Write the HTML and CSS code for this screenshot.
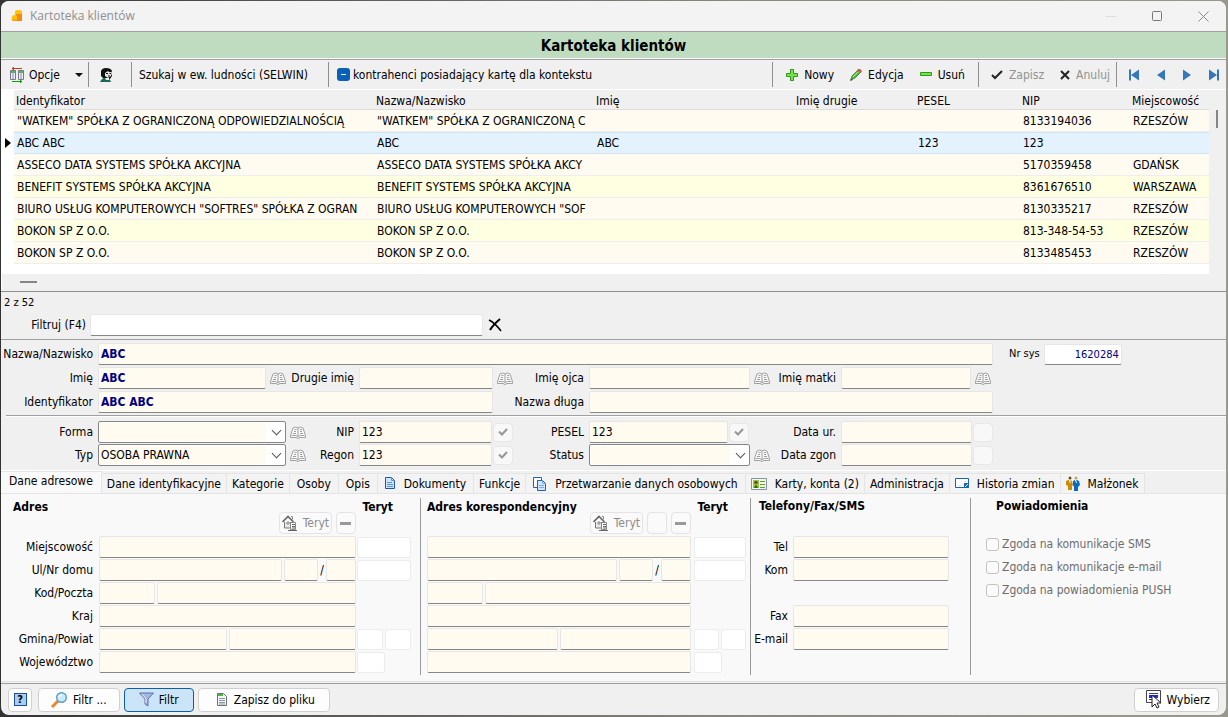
FILE: index.html
```html
<!DOCTYPE html>
<html lang="pl">
<head>
  <meta charset="UTF-8">
  <meta name="viewport" content="width=device-width, initial-scale=1.0">
  <title>Kartoteka klientów</title>
  <link rel="stylesheet" href="styles.css">
</head>
<body>
  <svg class="defs" aria-hidden="true">
    <symbol id="book" viewBox="0 0 16 14">
      <path d="M.5 12.500V10.500L3 3Q5.500 1 8 3Q10.500 1 13 3L15.500 10.500V12.500H10L8 13.500L6 12.500z" fill="#f8f8f8" stroke="#a0a0a0"/>
      <path d="M8 3v8M4.500 4.500h2M4 6.500h2M3 8.500h3M10 4.500h2M10 6.500h2M10 8.500h3M1.500 10.500h4l2.500 1 2.500-1h4" fill="none" stroke="#a0a0a0"/>
    </symbol>
    <symbol id="tick" viewBox="0 0 10 10">
      <path d="M1 4.500L4 7.500L9 2" fill="none" stroke="#969696" stroke-width="2"/>
    </symbol>
    <symbol id="house" viewBox="0 0 16 16">
      <path d="M2.500 7v6h6V7" fill="#e8e8e8" stroke="#777"/>
      <path d="M.5 7L6 1.500L11.500 7" fill="none" stroke="#666" stroke-width="1.600"/>
      <path d="M9 1.500h1.500v3M5 7h2v2H5z" fill="none" stroke="#888"/>
      <path d="M8.500 7.500h5v7h-5z" fill="#fff" stroke="#888"/>
      <path d="M10 9.500h3M10 11.500h3M10 13h3M6 15.500h9" stroke="#666"/>
    </symbol>
  </svg>

  <div class="window">
    <div class="titlebar">
      <svg width="12" height="14" viewBox="0 0 12 14"><path d="M4 3q0-2 3-2t4 1v5H4z" fill="#ffc20a"/><path d="M5 5h6v7H5z" fill="#f58a12"/><path d="M1 7q2-2 5 0v5H2Q0 12 1 7z" fill="#ffc20a"/><path d="M1 10q4 2 10 0v1q-5 2-10 0z" fill="#ef8b12"/></svg>
      <span class="caption">Kartoteka klientów</span>
      <button class="win-btn" aria-label="Minimalizuj"><svg width="11" height="11"><path d="M0 5.500h10" stroke="#ddd"/></svg></button>
      <button class="win-btn" aria-label="Maksymalizuj"><svg width="11" height="11"><rect x=".5" y=".5" width="9" height="9" rx="1" fill="none" stroke="#777"/></svg></button>
      <button class="win-btn" aria-label="Zamknij"><svg width="11" height="11"><path d="M.5 .5l10 10M10.500 .5l-10 10" stroke="#888"/></svg></button>
    </div>

    <h1 class="banner">Kartoteka klientów</h1>

    <div class="toolbar">
      <button class="tool options">
        <svg width="14" height="16" viewBox="0 0 14 16"><path d="M.5 3.500h5v9h-5zM8.500 3.500h5v9h-5z" fill="#eef" stroke="#778"/><path d="M1 4h4v2H1zM9 4h4v2H9z" fill="#5b5"/><path d="M3 6v6M11 6v6" stroke="#88a"/><path d="M2 1.500h10M4 0L2 1.500L4 3" fill="none" stroke="#c33"/><path d="M2 14.500h10M10 13l2 1.500-2 1.500" fill="none" stroke="#191"/></svg>
        <span>Opcje</span>
        <svg class="drop" width="8" height="4"><path d="M0 0h8L4 4z" fill="#111"/></svg>
      </button>
      <span class="sep"></span>
      <button class="tool person" aria-label="Osoba">
        <svg width="13" height="14" viewBox="0 0 13 14"><path d="M1 3q1-3 5-3 5 0 6 3l-1 2 1 3-2 3H4L1 8z" fill="#111"/><path d="M5 5l3-2 1 1 2 0v4L8 10 5 8z" fill="#e4e4e4"/><path d="M6 5.500h2M9.500 5.500H11M8 8h2" stroke="#111"/><path d="M0 14q1-3 4-4h5l2 4z" fill="#186a5a"/><path d="M5 10h4l0 2H6z" fill="#eee"/></svg>
      </button>
      <span class="sep"></span>
      <button class="tool selwin">Szukaj w ew. ludności (SELWIN)</button>
      <span class="sep"></span>
      <label class="context"><input type="checkbox" class="mixed"> kontrahenci posiadający kartę dla kontekstu</label>
      <span class="sep push"></span>
      <button class="tool"><svg width="12" height="12"><path d="M4.500 .5h3v4h4v3h-4v4h-3v-4h-4v-3h4z" fill="#7be04a" stroke="#2a9a1c"/></svg>Nowy</button>
      <button class="tool"><svg width="12" height="12"><path d="M1 11l1-4 6-6 3 2-6 6z" fill="#4cbc36" stroke="#5c8a4c"/><path d="M7 1l1-1h2l2 2-1 2z" fill="#d9544a"/><path d="M3 8l5-5" stroke="#b6f09a"/><path d="M0 12l1-3 2 2z" fill="#555"/></svg>Edycja</button>
      <button class="tool"><svg width="12" height="5"><path d="M.5 .5h11v3H.5z" fill="#7be04a" stroke="#2a9a1c"/></svg>Usuń</button>
      <span class="sep"></span>
      <button class="tool" disabled><svg width="12" height="10"><path d="M1 5l3 3 7-7" fill="none" stroke="#222" stroke-width="2"/></svg>Zapisz</button>
      <button class="tool cancel" disabled><svg width="10" height="10"><path d="M1 1l8 8M9 1L1 9" stroke="#222" stroke-width="2"/></svg>Anuluj</button>
      <span class="sep"></span>
      <div class="nav">
        <button aria-label="Pierwszy"><svg width="10" height="12"><path d="M0 .5h2v11H0zM10 .5v11L2 6z" fill="#3577b8"/></svg></button>
        <button aria-label="Poprzedni"><svg width="8" height="12"><path d="M8 .5v11L0 6z" fill="#3577b8"/></svg></button>
        <button aria-label="Następny"><svg width="8" height="12"><path d="M0 .5v11L8 6z" fill="#3577b8"/></svg></button>
        <button aria-label="Ostatni"><svg width="10" height="12"><path d="M8 .5h2v11H8zM0 .5v11L8 6z" fill="#3577b8"/></svg></button>
      </div>
    </div>

    <div class="grid-box">
      <div class="grid-scroll">
        <table>
          <colgroup>
            <col class="c-mark"><col class="c-id"><col class="c-name"><col class="c-first"><col class="c-second"><col class="c-pesel"><col class="c-nip"><col>
          </colgroup>
          <thead>
            <tr><th class="mark"></th><th>Identyfikator</th><th>Nazwa/Nazwisko</th><th>Imię</th><th>Imię drugie</th><th>PESEL</th><th>NIP</th><th>Miejscowość</th></tr>
          </thead>
          <tbody>
            <tr><td class="mark"></td><td>"WATKEM" SPÓŁKA Z OGRANICZONĄ ODPOWIEDZIALNOŚCIĄ</td><td>"WATKEM" SPÓŁKA Z OGRANICZONĄ C</td><td></td><td></td><td></td><td>8133194036</td><td>RZESZÓW</td></tr>
            <tr class="selected"><td class="mark"><svg width="6" height="10"><path d="M0 0v10l6-5z"/></svg></td><td>ABC ABC</td><td>ABC</td><td>ABC</td><td></td><td>123</td><td>123</td><td></td></tr>
            <tr><td class="mark"></td><td>ASSECO DATA SYSTEMS SPÓŁKA AKCYJNA</td><td>ASSECO DATA SYSTEMS SPÓŁKA AKCY</td><td></td><td></td><td></td><td>5170359458</td><td>GDAŃSK</td></tr>
            <tr class="alt"><td class="mark"></td><td>BENEFIT SYSTEMS SPÓŁKA AKCYJNA</td><td>BENEFIT SYSTEMS SPÓŁKA AKCYJNA</td><td></td><td></td><td></td><td>8361676510</td><td>WARSZAWA</td></tr>
            <tr><td class="mark"></td><td>BIURO USŁUG KOMPUTEROWYCH "SOFTRES" SPÓŁKA Z OGRAN</td><td>BIURO USŁUG KOMPUTEROWYCH "SOF</td><td></td><td></td><td></td><td>8130335217</td><td>RZESZÓW</td></tr>
            <tr class="alt"><td class="mark"></td><td>BOKON SP Z O.O.</td><td>BOKON SP Z O.O.</td><td></td><td></td><td></td><td>813-348-54-53</td><td>RZESZÓW</td></tr>
            <tr><td class="mark"></td><td>BOKON SP Z O.O.</td><td>BOKON SP Z O.O.</td><td></td><td></td><td></td><td>8133485453</td><td>RZESZÓW</td></tr>
          </tbody>
        </table>
        <div class="vbar"><span></span></div>
      </div>
      <div class="hbar"><span></span></div>
    </div>

    <div class="filter">
      <div class="count">2 z 52</div>
      <div class="filter-row">
        <label for="filter">Filtruj (F4)</label>
        <input type="text" id="filter">
        <button class="clear" aria-label="Wyczyść"><svg width="14" height="14"><path d="M1 2Q7 5 13 13" fill="none" stroke="#000" stroke-width="1.600"/><path d="M12 1Q5 7 2 12" fill="none" stroke="#000" stroke-width="2"/></svg></button>
      </div>
    </div>

    <div class="person-form">
      <div class="form-grid">
        <label for="name">Nazwa/Nazwisko</label>
        <div class="cell to-end"><input class="strong" type="text" id="name" value="ABC"></div>
        <div class="cell sys"><label for="sys">Nr sys</label><input type="text" id="sys" value="1620284"></div>

        <label for="first">Imię</label>
        <div class="cell first"><input class="strong" type="text" id="first" value="ABC"><svg class="book"><use href="#book"/></svg></div>
        <label for="second">Drugie imię</label>
        <div class="cell"><input type="text" id="second"><svg class="book"><use href="#book"/></svg></div>
        <label for="father">Imię ojca</label>
        <div class="cell"><input type="text" id="father"><svg class="book"><use href="#book"/></svg></div>
        <label for="mother">Imię matki</label>
        <div class="cell last"><input type="text" id="mother"><svg class="book"><use href="#book"/></svg></div>

        <label class="row-start" for="ident">Identyfikator</label>
        <div class="cell ident"><input class="strong" type="text" id="ident" value="ABC ABC"></div>
        <label for="long">Nazwa długa</label>
        <div class="cell long"><input type="text" id="long"></div>
      </div>
      <hr>
      <div class="form-grid tight">
        <label for="form">Forma</label>
        <div class="cell"><span class="combo"><select id="form"><option></option></select></span><svg class="book"><use href="#book"/></svg></div>
        <label for="nip">NIP</label>
        <div class="cell snug"><input type="text" id="nip" value="123"><button class="mini" aria-label="Sprawdź NIP"><svg width="10" height="10"><use href="#tick"/></svg></button></div>
        <label for="pesel">PESEL</label>
        <div class="cell snug pesel"><input type="text" id="pesel" value="123"><button class="mini" aria-label="Sprawdź PESEL"><svg width="10" height="10"><use href="#tick"/></svg></button></div>
        <label for="born">Data ur.</label>
        <div class="cell snug"><input type="text" id="born"><button class="mini" aria-label="Wybierz datę"></button></div>

        <label class="row-start" for="type">Typ</label>
        <div class="cell"><span class="combo"><select id="type"><option>OSOBA PRAWNA</option></select></span><svg class="book"><use href="#book"/></svg></div>
        <label for="regon">Regon</label>
        <div class="cell snug"><input type="text" id="regon" value="123"><button class="mini" aria-label="Sprawdź Regon"><svg width="10" height="10"><use href="#tick"/></svg></button></div>
        <label for="status">Status</label>
        <div class="cell"><span class="combo"><select id="status"><option></option></select></span><svg class="book"><use href="#book"/></svg></div>
        <label for="death">Data zgon</label>
        <div class="cell snug"><input type="text" id="death"><button class="mini" aria-label="Wybierz datę"></button></div>
      </div>
    </div>

    <div class="tabs" role="tablist">
      <button class="active" role="tab" aria-selected="true">Dane adresowe</button>
      <button role="tab">Dane identyfikacyjne</button>
      <button role="tab">Kategorie</button>
      <button class="roomy" role="tab">Osoby</button>
      <button class="roomy" role="tab">Opis</button>
      <button class="roomy" role="tab"><svg width="11" height="13"><path d="M.5 .5h6l3 3v8h-9z" fill="#cfe4fa" stroke="#1c58a8"/><path d="M6.500 .5v3h3M2 5.500h5M2 7.500h6M2 9.500h6" fill="none" stroke="#5a94d6"/></svg>Dokumenty</button>
      <button role="tab">Funkcje</button>
      <button class="roomy" role="tab"><svg width="14" height="14"><path d="M.5 .5h8v10h-8z" fill="#fff" stroke="#1c62b8"/><path d="M4.500 3.500h5l3 3v7h-8z" fill="#d3e6fb" stroke="#1c62b8"/><path d="M9.500 3.500v3h3M6 8.500h5M6 10.500h5" fill="none" stroke="#7aaee0"/></svg>Przetwarzanie danych osobowych</button>
      <button role="tab"><svg width="16" height="12"><path d="M.5 .5h15v11H.5z" fill="#f3f7e8" stroke="#8594a8"/><path d="M2 2h6v8H2z" fill="#9ac84a"/><circle cx="5" cy="4.500" r="1.800" fill="#71521c"/><path d="M3 10q2-6 4 0z" fill="#356e12"/><path d="M9 3.500h5M9 6.500h5M9 9.500h5" stroke="#6a9b38"/></svg>Karty, konta (2)</button>
      <button role="tab">Administracja</button>
      <button role="tab"><svg width="14" height="11"><path d="M.5 .5h13v9H.5z" fill="#fff" stroke="#1464b8"/><path d="M3 8q5 0 8-5" fill="none" stroke="#dde"/><path d="M9.500 5.500h4v4h-4z" fill="#1464b8" stroke="#1464b8"/><path d="M10 9l3-3" stroke="#fff"/></svg>Historia zmian</button>
      <button role="tab"><svg width="14" height="15"><circle cx="4" cy="2" r="1.500" fill="#6b4a12"/><circle cx="10" cy="2" r="1.500" fill="#c9a35b"/><path d="M0 5q3-2 6 0l1 4-1 1v4H2v-4L0 9z" fill="#c98c05"/><path d="M7 5q3-2 6 0l1 4-2 2v4H8v-4L7 9z" fill="#0a68c8"/><path d="M3.500 4l1 3M9.500 4l1 3" stroke="#fff"/></svg>Małżonek</button>
    </div>

    <div class="panel">
      <section class="address home">
        <div class="heads"><h2>Adres</h2><h2 class="teryt">Teryt</h2></div>
        <div class="actions">
          <button disabled><svg width="16" height="16"><use href="#house"/></svg>Teryt</button>
          <button class="mini" disabled aria-label="Usuń adres"><svg width="12" height="3"><path d="M0 1.500h11" stroke="#999" stroke-width="3"/></svg></button>
        </div>
        <div class="address-rows">
          <label for="a-city">Miejscowość</label>
          <div class="cell"><input type="text" id="a-city"></div>
          <div class="cell codes"><input type="text" aria-label="Teryt miejscowości" disabled></div>
          <label for="a-street">Ul/Nr domu</label>
          <div class="cell street"><input type="text" id="a-street"><input class="no" type="text" aria-label="Nr domu"><span>/</span><input class="flat" type="text" aria-label="Nr lokalu"></div>
          <div class="cell codes"><input type="text" aria-label="Teryt ulicy" disabled></div>
          <label for="a-zip">Kod/Poczta</label>
          <div class="cell"><input class="zip" type="text" id="a-zip"><input type="text" aria-label="Poczta"></div>
          <span></span>
          <label for="a-land">Kraj</label>
          <div class="cell"><input type="text" id="a-land"></div>
          <span></span>
          <label for="a-gmina">Gmina/Powiat</label>
          <div class="cell"><input type="text" id="a-gmina"><input type="text" aria-label="Powiat"></div>
          <div class="cell codes"><input type="text" aria-label="Teryt gminy" disabled><input type="text" aria-label="Teryt powiatu" disabled></div>
          <label for="a-woj">Województwo</label>
          <div class="cell"><input type="text" id="a-woj"></div>
          <div class="cell codes"><input class="half" type="text" aria-label="Teryt województwa" disabled></div>
        </div>
      </section>

      <section class="address mail">
        <div class="heads"><h2>Adres korespondencyjny</h2><h2 class="teryt">Teryt</h2></div>
        <div class="actions">
          <button disabled><svg width="16" height="16"><use href="#house"/></svg>Teryt</button>
          <button class="mini" disabled aria-label="Kopiuj adres"></button>
          <button class="mini" disabled aria-label="Usuń adres"><svg width="12" height="3"><path d="M0 1.500h11" stroke="#999" stroke-width="3"/></svg></button>
        </div>
        <div class="address-rows">
          <div class="cell"><input type="text" aria-label="Miejscowość"></div>
          <div class="cell codes"><input type="text" aria-label="Teryt miejscowości" disabled></div>
          <div class="cell street"><input type="text" aria-label="Ulica"><input class="no" type="text" aria-label="Nr domu"><span>/</span><input class="flat" type="text" aria-label="Nr lokalu"></div>
          <div class="cell codes"><input type="text" aria-label="Teryt ulicy" disabled></div>
          <div class="cell"><input class="zip" type="text" aria-label="Kod"><input type="text" aria-label="Poczta"></div>
          <span></span>
          <div class="cell"><input type="text" aria-label="Kraj"></div>
          <span></span>
          <div class="cell"><input type="text" aria-label="Gmina"><input type="text" aria-label="Powiat"></div>
          <div class="cell codes"><input type="text" aria-label="Teryt gminy" disabled><input type="text" aria-label="Teryt powiatu" disabled></div>
          <div class="cell"><input type="text" aria-label="Województwo"></div>
          <div class="cell codes"><input class="half" type="text" aria-label="Teryt województwa" disabled></div>
        </div>
      </section>

      <section class="phones">
        <h2>Telefony/Fax/SMS</h2>
        <div class="address-rows">
          <label for="tel">Tel</label><div class="cell"><input type="text" id="tel"></div>
          <label for="kom">Kom</label><div class="cell"><input type="text" id="kom"></div>
          <span></span><span></span>
          <label for="fax">Fax</label><div class="cell"><input type="text" id="fax"></div>
          <label for="email">E-mail</label><div class="cell"><input type="text" id="email"></div>
        </div>
      </section>

      <section class="notify">
        <h2>Powiadomienia</h2>
        <label><input type="checkbox" disabled>Zgoda na komunikacje SMS</label>
        <label><input type="checkbox" disabled>Zgoda na komunikacje e-mail</label>
        <label><input type="checkbox" disabled>Zgoda na powiadomienia PUSH</label>
      </section>
    </div>

    <div class="footer">
      <button class="help" aria-label="Pomoc"><span>?</span></button>
      <button><svg width="17" height="16"><path d="M1 15l6-6" stroke="#e8862a" stroke-width="3"/><circle cx="10.500" cy="5.500" r="4.800" fill="#c9ebfb" stroke="#5a9cc8" stroke-width="1.400"/><path d="M8 5q1-2 3-2" fill="none" stroke="#fff" stroke-width="1.400"/></svg>Filtr ...</button>
      <button class="pressed"><svg width="15" height="15"><path d="M.5 1h14L9 7v7l-3-2V7z" fill="#a9b6e0" stroke="#6070a8"/><path d="M3 2l4 5v4" fill="none" stroke="#e8edff"/></svg>Filtr</button>
      <button class="wide"><svg width="10" height="13"><path d="M.5 .5h6l3 3v9h-9z" fill="#f4f8f4" stroke="#67727c"/><path d="M1 1h5v2H1z" fill="#4db848"/><path d="M2 5.500h6M2 7.500h6M2 9.500h6M2 11h6" stroke="#8a98a4"/></svg>Zapisz do pliku</button>
      <button class="choose"><svg width="16" height="19"><path d="M.5 .5h14v12H.5z" fill="#fff" stroke="#444"/><path d="M3 3.500h9M3 9.500h3" stroke="#444"/><path d="M3 5h9v3H3z" fill="#1a2af0"/><path d="M6 5v12l3-3 2 4 2-1-2-4h4z" fill="#fff" stroke="#222"/></svg>Wybierz</button>
    </div>
  </div>

  <script>
    document.querySelector('.mixed').indeterminate = true;
  </script>
</body>
</html>
```
FILE: styles.css
```css
* {
  box-sizing: border-box;
}

body {
  margin: 0;
  padding: 1px 2px 2px 1px;
  background: linear-gradient(90deg, #333 0%, #8a8780 60%, #9a978c 100%);
  font-family: "DejaVu Sans Condensed", "DejaVu Sans", sans-serif;
  font-size: 12px;
  line-height: 16px;
  color: #000;
  white-space: nowrap;
}

button,
input,
select {
  font: inherit;
  color: inherit;
  margin: 0;
}

button {
  display: inline-flex;
  align-items: center;
  justify-content: center;
  background: none;
  border: none;
  padding: 0;
}

svg {
  flex: none;
}

h1,
h2 {
  margin: 0;
  font-size: 12px;
  font-weight: bold;
}

.defs {
  position: absolute;
  width: 0;
  height: 0;
}

.window {
  display: flex;
  flex-direction: column;
  min-height: calc(100vh - 3px);
  background: #f0f0f0;
  border-radius: 8px;
  overflow: hidden;
}

/* title bar */

.titlebar {
  display: flex;
  align-items: center;
  height: 30px;
  padding-left: 10px;
  background: #f3f3f3;
  font-family: "Open Sans", sans-serif;
  font-size: 12px;
  color: #8f8f8f;
}

.caption {
  flex: 1;
  margin-left: 7px;
}

.win-btn {
  width: 46px;
  height: 30px;
}

.banner {
  height: 28px;
  border-top: 1px solid #a0a0a0;
  border-bottom: 1px solid #fff;
  background: #c0dcc0;
  font-size: 15px;
  line-height: 28px;
  text-align: center;
}

/* toolbar */

.toolbar {
  display: flex;
  align-items: center;
  height: 31px;
  padding: 0 7px 0 9px;
  border-top: 1px solid #a0a0a0;
  border-bottom: 1px solid #fff;
}

.tool {
  gap: 6px;
  margin-right: 16px;
}

.tool:disabled {
  color: #929292;
}

.tool.options {
  margin-right: 5px;
  gap: 5px;
}

.drop {
  margin-left: 10px;
}

.tool.person {
  width: 42px;
  margin: 0;
  padding-right: 7px;
}

.tool.selwin {
  margin: 0 20px 0 7px;
}

.tool.cancel {
  margin-right: 9px;
}

.sep {
  width: 1px;
  height: 25px;
  background: #8e8e8e;
}

.sep.push {
  margin: 0 13px 0 auto;
}

.tool + .sep:not(:nth-of-type(-n+3)) {
  margin-left: -3px;
  margin-right: 12px;
}

.context {
  display: flex;
  align-items: center;
  gap: 3px;
  margin-left: 8px;
}

.mixed {
  appearance: none;
  display: flex;
  align-items: center;
  justify-content: center;
  width: 13px;
  height: 13px;
  border-radius: 3px;
  background: #0a5fb8;
}

.mixed::before {
  content: "";
  width: 5px;
  height: 1px;
  background: #fff;
}

.nav {
  display: flex;
  align-items: center;
  gap: 18px;
}

/* client list */

.grid-box {
  background: #fff;
  border-bottom: 1px solid #8e8e8e;
  padding-left: 1px;
}

.grid-scroll {
  display: flex;
  align-items: stretch;
  height: 184px;
}

table {
  flex: 1;
  width: 0;
  align-self: flex-start;
  table-layout: fixed;
  border-collapse: separate;
  border-spacing: 0;
}

.c-mark { width: 12px; }
.c-id { width: 360px; }
.c-name { width: 220px; }
.c-first { width: 200px; }
.c-second { width: 121px; }
.c-pesel { width: 105px; }
.c-nip { width: 110px; }

th,
td {
  padding: 0 2px 0 3px;
  overflow: hidden;
  text-align: left;
  font-weight: normal;
}

th {
  height: 20px;
  padding: 2px 2px 0;
  background: #f0f0f0;
  border-bottom: 1px solid #dcdcdc;
}

td {
  height: 22px;
  background: #fffbf0;
  border-bottom: 1px solid #eeeeee;
}

.alt td {
  background: #ffffe1;
}

.selected td {
  background: #e3f2fd;
  border-top: 1px solid #cfe5f6;
  border-bottom: 1px solid #cfe5f6;
}

tr .mark {
  padding: 0 0 0 3px;
  background: #fff;
  border: none;
}

.mark svg {
  display: block;
}

.vbar {
  width: 17px;
  padding: 20px 0 0 7px;
  background: #f0f0f0;
}

.vbar span {
  display: block;
  width: 2px;
  height: 18px;
  background: #858585;
}

.hbar {
  height: 17px;
  padding: 7px 0 0 18px;
  background: #f0f0f0;
}

.hbar span {
  display: block;
  width: 17px;
  height: 2px;
  background: #858585;
}

/* filter */

.filter {
  padding: 3px 3px 3px;
}

.count {
  font-size: 11px;
}

.filter-row {
  display: flex;
  align-items: center;
  margin-top: 3px;
}

.filter-row label {
  width: 86px;
  padding-right: 4px;
  text-align: right;
}

.filter-row input {
  width: 32.2%;
}

.clear {
  margin-left: 5px;
}

/* text boxes */

input[type="text"] {
  min-width: 0;
  height: 22px;
  padding: 0 2px;
  background: #fffbf0;
  border: 1px solid #e6e6e6;
  border-bottom-color: #868686;
  border-radius: 2px;
}

.cell > input[type="text"] {
  flex: 1;
}

#filter,
#sys {
  background: #fff;
}

input.strong {
  font-weight: bold;
  color: #000080;
}

/* main form */

.person-form {
  border-top: 1px solid #a0a0a0;
  padding: 3px 0 4px 1px;
}

.form-grid {
  display: grid;
  grid-template-columns: 96px 208fr 53px 154fr 76px 181fr 71px 152fr 233px;
  row-gap: 2px;
  align-items: center;
}

.form-grid.tight {
  row-gap: 1px;
}

.form-grid > label {
  display: flex;
  justify-content: flex-end;
  padding-right: 5px;
}

.row-start {
  grid-column-start: 1;
}

.cell {
  display: flex;
  align-items: center;
  gap: 4px;
  min-width: 0;
}

.cell.to-end {
  grid-column: 2 / 9;
}

.cell.first {
  padding-right: 20px;
}

.cell.last {
  padding-right: 2px;
}

.cell.ident {
  grid-column: 2 / 5;
  padding-right: 20px;
}

.cell.long {
  grid-column: 6 / 9;
}

.cell.sys {
  padding-left: 16px;
  font-size: 11px;
}

.cell.sys input {
  flex: none;
  width: 78px;
  height: 21px;
  text-align: right;
  color: #000080;
}

.cell.snug {
  gap: 1px;
}

.cell.pesel {
  padding-right: 21px;
}

.book {
  width: 16px;
  height: 14px;
}

.combo {
  position: relative;
  display: flex;
  flex: 1;
  min-width: 0;
}

.combo::after {
  content: "";
  position: absolute;
  right: 6px;
  top: 6px;
  width: 6px;
  height: 6px;
  border-right: 1px solid #555;
  border-bottom: 1px solid #555;
  transform: rotate(45deg);
  pointer-events: none;
}

select {
  appearance: none;
  width: 100%;
  height: 22px;
  padding: 0 20px 0 2px;
  border: 1px solid #868686;
  border-radius: 2px;
  background: linear-gradient(#fffbf0, #fffbf0) no-repeat 1px 1px / calc(100% - 20px) 18px #fff;
}

.mini {
  width: 20px;
  height: 19px;
  background: #f8f8f8;
  border: 1px solid #e8e8e8;
  border-radius: 4px;
}

hr {
  margin: 2px 0 4px 4px;
  border: none;
  border-top: 1px solid #a0a0a0;
  border-bottom: 1px solid #fff;
}

/* tabs */

.tabs {
  display: flex;
  align-items: flex-end;
  height: 23px;
  border-top: 1px solid #fff;
}

.tabs button {
  height: 20px;
  padding: 0 5px;
  gap: 8px;
  background: #f3f3f3;
  border: 1px solid #e4e4e4;
  border-left: none;
  border-bottom: none;
}

.tabs .roomy {
  padding: 0 7px;
}

.tabs .active {
  height: 22px;
  padding: 0 8px 3px;
  background: #f9f9f9;
}

.panel {
  flex: 1;
  display: grid;
  grid-template-columns: 420fr 330fr 220fr 255fr;
  background: #f9f9f9;
  border-top: 1px solid #e4e4e4;
  border-bottom: 1px solid #e4e4e4;
}

.panel section {
  min-width: 0;
  margin: 4px 0 6px;
  border-right: 1px solid #9a9a9a;
}

.panel section:last-child {
  border: none;
}

.heads {
  display: flex;
  justify-content: space-between;
}

.actions {
  display: flex;
  justify-content: flex-end;
  gap: 4px;
  height: 22px;
  margin-top: -3px;
}

.actions button {
  height: 22px;
  padding: 0 2px;
  gap: 5px;
  background: #fafafa;
  border: 1px solid #e4e4e4;
  border-radius: 4px;
  color: #8c8c8c;
}

.actions .mini {
  padding: 0;
}

.address-rows {
  display: grid;
  row-gap: 1px;
  grid-auto-rows: 22px;
  align-items: center;
  margin-top: 2px;
}

.address-rows > label {
  padding-right: 5px;
  text-align: right;
}

.address-rows .cell {
  gap: 2px;
}

.cell > input.no {
  flex: 0 0 34px;
}

.cell > input.flat {
  flex: 0 0 30px;
}

.cell > input.zip {
  flex: 0 0 56px;
}

.codes > input[type="text"] {
  background: #fff;
  height: 21px;
  border-color: #ececec;
}

.codes > input.half {
  flex: 0 0 28px;
}

.home .heads {
  padding: 1px 27px 0 12px;
}

.home .actions {
  padding-right: 64px;
}

.home .address-rows {
  grid-template-columns: 97px 1fr 54px;
  column-gap: 1px;
  padding-right: 9px;
}

.mail .heads {
  padding: 1px 22px 0 6px;
}

.mail .actions {
  padding-right: 59px;
}

.mail .address-rows {
  grid-template-columns: 1fr 52px;
  column-gap: 3px;
  padding: 0 4px 0 6px;
}

.phones h2 {
  padding-left: 8px;
}

.phones .address-rows {
  grid-template-columns: 42px 1fr;
  margin-top: 22px;
  padding-right: 21px;
}

.notify {
  display: flex;
  flex-direction: column;
  align-items: flex-start;
  gap: 7px;
  padding-left: 15px;
}

.notify h2 {
  padding: 0 0 15px 10px;
}

.notify label {
  display: flex;
  align-items: center;
  gap: 3px;
  color: #6d6d6d;
}

.notify input {
  appearance: none;
  width: 13px;
  height: 13px;
  border: 1px solid #c3c3c3;
  border-radius: 3px;
  background: #fbfbfb;
}

/* bottom bar */

.footer {
  display: flex;
  align-items: center;
  gap: 4px;
  height: 32px;
  margin-top: 1px;
  padding: 0 7px;
  border-top: 1px solid #a0a0a0;
}

.footer button {
  height: 24px;
  padding: 0 12px;
  gap: 5px;
  background: #fdfdfd;
  border: 1px solid #d0d0d0;
  border-radius: 4px;
}

.footer .help {
  width: 24px;
  padding: 0;
  margin-right: 2px;
}

.help span {
  width: 13px;
  height: 13px;
  border: 1px solid #1c4f9c;
  background: #a9cdf4;
  font-weight: bold;
  font-size: 11px;
  line-height: 11px;
}

.footer .pressed {
  padding: 0 14px;
  background: #cce4f7;
  border-color: #0a5fa8;
}

.footer .wide {
  padding: 0 14px 0 18px;
  gap: 7px;
}

.footer .choose {
  margin-left: auto;
  padding: 0 8px 0 11px;
}
```
